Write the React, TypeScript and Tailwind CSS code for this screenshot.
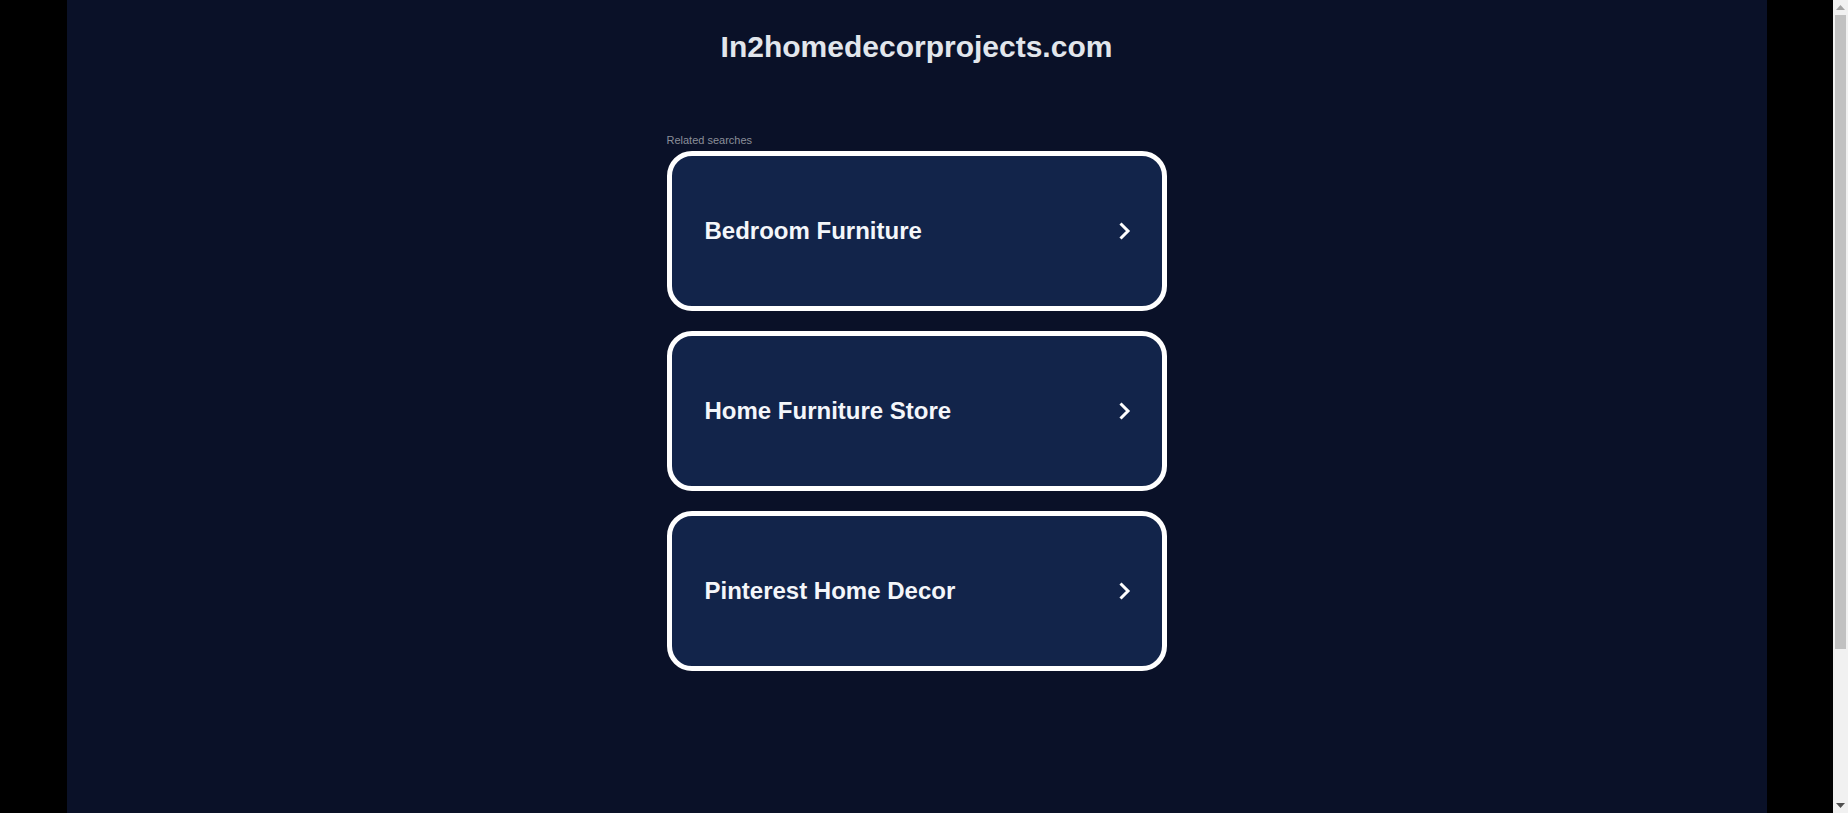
const SEARCHES = ['Bedroom Furniture', 'Home Furniture Store', 'Pinterest Home Decor']

function Chevron() {
  return (
    <svg width="14" height="18" viewBox="0 0 14 18" fill="none" className="shrink-0">
      <path d="M2.5 1.5 L10 9 L2.5 16.5" stroke="#ffffff" strokeWidth="3" />
    </svg>
  )
}

// classic browser scrollbar as seen in the screenshot
function Scrollbar() {
  return (
    <div className="flex w-[15px] shrink-0 flex-col items-center bg-[#f1f1f1]">
      <div className="flex h-[15px] w-full items-center justify-center">
        <svg width="9" height="5" viewBox="0 0 9 5">
          <path d="M0 5 L4.5 0 L9 5 Z" fill="#a3a3a3" />
        </svg>
      </div>
      <div className="h-[634px] w-[11px] bg-[#c1c1c1]" />
      <div className="flex-1" />
      <div className="flex h-[15px] w-full items-center justify-center">
        <svg width="9" height="5" viewBox="0 0 9 5">
          <path d="M0 0 L9 0 L4.5 5 Z" fill="#505050" />
        </svg>
      </div>
    </div>
  )
}

export default function App() {
  return (
    <div className="flex h-screen overflow-hidden bg-black font-['Liberation_Sans',Arial,sans-serif]">
      <div className="flex-1 overflow-hidden">
        <div className="mx-auto flex h-full w-full max-w-[1700px] flex-col items-center bg-[#0a1128]">
          {/* Domain */}
          <h1 className="pt-[30px] text-[30px] font-bold leading-[34px] text-[#e2e6ec]">
            In2homedecorprojects.com
          </h1>

          {/* Related searches */}
          <div className="mt-[70px] flex w-[500px] flex-col">
            <p className="text-[11px] leading-[13px] text-[#8a8f99]">Related searches</p>
            <div className="mt-[4px] flex flex-col gap-[20px]">
              {SEARCHES.map((label) => (
                <a
                  key={label}
                  href="#"
                  className="flex h-[160px] items-center justify-between rounded-[25px] border-[5px] border-white bg-[#12244a] pl-[33px] pr-[30px]"
                >
                  <span className="text-[24px] font-bold text-[#f4f6fa]">{label}</span>
                  <Chevron />
                </a>
              ))}
            </div>
          </div>
        </div>
      </div>
      <Scrollbar />
    </div>
  )
}
